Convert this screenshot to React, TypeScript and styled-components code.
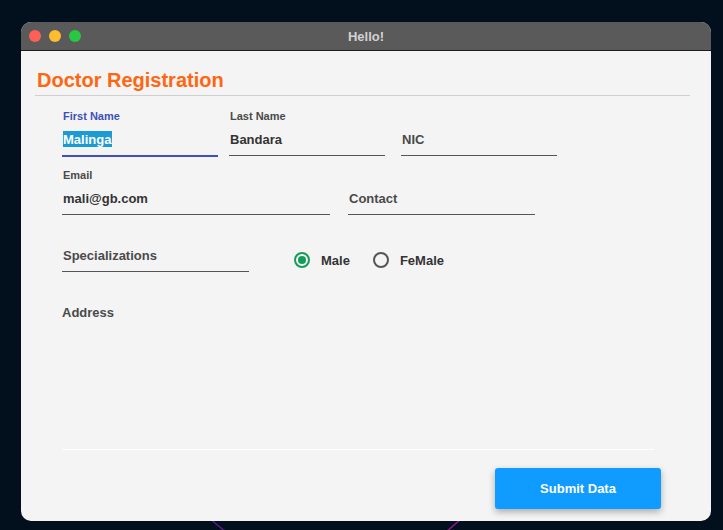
import React from "react";
import styled, { createGlobalStyle } from "styled-components";

const Global = createGlobalStyle`
  html, body { margin: 0; padding: 0; }
  body {
    background: #020f1d;
    font-family: "Liberation Sans", Arial, sans-serif;
    width: 723px;
    height: 530px;
    overflow: hidden;
  }
`;

const Desktop = styled.div`
  position: relative;
  width: 723px;
  height: 530px;
  box-sizing: border-box;
  padding: 22px 12px 0 21px;
`;

const Backdrop = styled.svg`
  position: absolute;
  left: 0;
  top: 0;
  width: 723px;
  height: 530px;
  z-index: 0;
`;

const Window = styled.div`
  position: relative;
  z-index: 1;
  width: 690px;
  height: 499px;
  border-radius: 10px;
  overflow: hidden;
  background: #f4f4f4;
  display: flex;
  flex-direction: column;
`;

const TitleBar = styled.div`
  height: 28px;
  background: #5a5a5a;
  border-bottom: 1px solid #1c1c1c;
  display: grid;
  grid-template-columns: 1fr auto 1fr;
  align-items: center;
`;

const Lights = styled.div`
  display: flex;
  gap: 8px;
  padding-left: 8px;
`;

const Light = styled.span<{ $c: string }>`
  width: 12px;
  height: 12px;
  border-radius: 50%;
  background: ${(p) => p.$c};
`;

const WinTitle = styled.div`
  color: #d2d2d2;
  font-weight: bold;
  font-size: 13px;
`;

const Header = styled.div`
  padding: 0 21px 0 14px;
`;

const Heading = styled.h1`
  margin: 17px 0 0 2px;
  font-size: 20px;
  line-height: 24px;
  font-weight: bold;
  color: #ff6612;
`;

const Rule = styled.div`
  margin-top: 3px;
  height: 1px;
  background: #cfcfcf;
`;

const Form = styled.div`
  padding-left: 41px;
  display: flex;
  flex-direction: column;
`;

const Row = styled.div<{ $mt: number }>`
  display: flex;
  align-items: flex-start;
  margin-top: ${(p) => p.$mt}px;
`;

const Field = styled.div<{ $w: number; $ml?: number }>`
  width: ${(p) => p.$w}px;
  margin-left: ${(p) => p.$ml ?? 0}px;
  display: flex;
  flex-direction: column;
`;

const Label = styled.div<{ $focus?: boolean }>`
  height: 14px;
  line-height: 14px;
  font-size: 11px;
  font-weight: bold;
  padding-left: 1px;
  color: ${(p) => (p.$focus ? "#3f51b5" : "#4a4a4a")};
`;

const Input = styled.div<{ $focus?: boolean; $muted?: boolean }>`
  margin-top: 4px;
  height: 20px;
  padding: 3px 0 5px 1px;
  line-height: 20px;
  font-size: 13px;
  font-weight: bold;
  color: ${(p) => (p.$muted ? "#4a4a4a" : "#333")};
  border-bottom: ${(p) => (p.$focus ? "2px solid #3f51b5" : "1px solid #555")};
  white-space: nowrap;
`;

const Selected = styled.span`
  background: #1c9ad4;
  color: #fff;
  padding: 1px 1px 0 0;
`;

const RadioGroup = styled.div`
  margin: 25px 0 0 45px;
  height: 20px;
  display: flex;
  align-items: center;
`;

const RadioItem = styled.label<{ $ml?: number }>`
  display: flex;
  align-items: center;
  gap: 11px;
  margin-left: ${(p) => p.$ml ?? 0}px;
  font-size: 13px;
  font-weight: bold;
  color: #333;
`;

const RadioCircle = styled.span<{ $on?: boolean }>`
  width: 16px;
  height: 16px;
  box-sizing: border-box;
  border-radius: 50%;
  border: 2px solid ${(p) => (p.$on ? "#169c5a" : "#555")};
  display: flex;
  align-items: center;
  justify-content: center;
  &::after {
    content: "";
    width: 8px;
    height: 8px;
    border-radius: 50%;
    background: ${(p) => (p.$on ? "#169c5a" : "transparent")};
  }
`;

const AddressLabel = styled.div`
  margin-top: 33px;
  line-height: 16px;
  font-size: 13px;
  font-weight: bold;
  color: #4a4a4a;
`;

const AddressArea = styled.div`
  width: 592px;
  height: 128px;
  border-bottom: 1px solid #ffffff;
`;

const Footer = styled.div`
  display: flex;
  justify-content: flex-end;
  padding-right: 50px;
  margin-top: 18px;
`;

const Button = styled.button`
  width: 166px;
  height: 41px;
  border: none;
  border-radius: 3px;
  background: #0f9bff;
  color: #fff;
  font-family: "Liberation Sans", Arial, sans-serif;
  font-size: 13px;
  font-weight: bold;
  box-shadow: 0 3px 7px rgba(0, 0, 0, 0.3);
  cursor: pointer;
`;

export default function App() {
  return (
    <>
      <Global />
      <Desktop>
        <Backdrop viewBox="0 0 723 530">
          <line x1="210" y1="519" x2="226" y2="532" stroke="#5a1a8a" strokeWidth="1.5" />
          <line x1="461" y1="519" x2="446" y2="532" stroke="#8a1a8a" strokeWidth="1.5" />
        </Backdrop>
        <Window>
          <TitleBar>
            <Lights>
              <Light $c="#fe5f57" />
              <Light $c="#febc2e" />
              <Light $c="#28c840" />
            </Lights>
            <WinTitle>Hello!</WinTitle>
            <div />
          </TitleBar>
          <Header>
            <Heading>Doctor Registration</Heading>
            <Rule />
          </Header>
          <Form>
            <Row $mt={13}>
              <Field $w={156}>
                <Label $focus>First Name</Label>
                <Input $focus>
                  <Selected>Malinga</Selected>
                </Input>
              </Field>
              <Field $w={156} $ml={11}>
                <Label>Last Name</Label>
                <Input>Bandara</Input>
              </Field>
              <Field $w={156} $ml={16}>
                <Label />
                <Input $muted>NIC</Input>
              </Field>
            </Row>
            <Row $mt={11}>
              <Field $w={268}>
                <Label>Email</Label>
                <Input>mali@gb.com</Input>
              </Field>
              <Field $w={187} $ml={18}>
                <Label />
                <Input $muted>Contact</Input>
              </Field>
            </Row>
            <Row $mt={10}>
              <Field $w={187}>
                <Label />
                <Input $muted>Specializations</Input>
              </Field>
              <RadioGroup>
                <RadioItem>
                  <RadioCircle $on />
                  Male
                </RadioItem>
                <RadioItem $ml={23}>
                  <RadioCircle />
                  FeMale
                </RadioItem>
              </RadioGroup>
            </Row>
            <AddressLabel>Address</AddressLabel>
            <AddressArea />
          </Form>
          <Footer>
            <Button>Submit Data</Button>
          </Footer>
        </Window>
      </Desktop>
    </>
  );
}
